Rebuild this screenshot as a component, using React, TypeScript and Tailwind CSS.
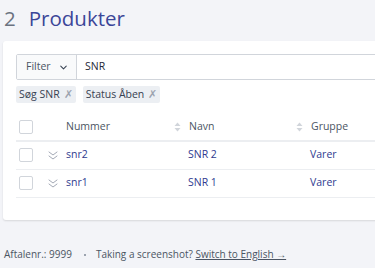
import React from "react";
import { ChevronDown } from "lucide-react";

interface Row {
  nummer: string;
  navn: string;
  gruppe: string;
}

const rows: Row[] = [
  { nummer: "snr2", navn: "SNR 2", gruppe: "Varer" },
  { nummer: "snr1", navn: "SNR 1", gruppe: "Varer" },
];

const Checkbox = () => (
  <span className="block h-[14px] w-[14px] rounded-[2px] border border-[#d1d5db] bg-white" />
);

const SortIcon = () => (
  <svg width="7" height="10" viewBox="0 0 7 10" className="shrink-0">
    <path d="M3.5 0.5 L6.5 4 L0.5 4 Z" fill="#d1d5db" />
    <path d="M3.5 9.5 L6.5 6 L0.5 6 Z" fill="#d1d5db" />
  </svg>
);

const DoubleChevron = () => (
  <svg width="10" height="9" viewBox="0 0 10 9" fill="none" stroke="#a3a9b5" strokeWidth="1" strokeLinecap="round" strokeLinejoin="round">
    <path d="M1 1 L5 4 L9 1" />
    <path d="M1 5 L5 8 L9 5" />
  </svg>
);

const Chip = ({ label }: { label: string }) => (
  <span className="flex h-[17px] items-center gap-[4px] rounded-[2px] bg-[#eceff3] px-[3px] text-[10.5px] text-[#374151]">
    {label}
    <span className="text-[11px] text-[#9ca3af]">✗</span>
  </span>
);

export default function App() {
  return (
    <div
      className="h-[268px] w-[375px] overflow-hidden bg-[#f3f4f8]"
      style={{ fontFamily: '"Open Sans", "Noto Sans", sans-serif' }}
    >
      <h1 className="flex h-[36px] items-center gap-[13px] pl-[4px] pt-[1px] text-[20.5px] leading-none">
        <span className="text-[#6b7280]">2</span>
        <span className="text-[#3b4699]">Produkter</span>
      </h1>

      <div className="ml-[3px] mt-[5px] h-[179px] w-[420px] rounded-[3px] bg-white pl-[13px] pt-[13px] shadow-[0_1px_2px_rgba(0,0,0,0.12)]">
        <div className="flex h-[26px] w-[400px] rounded-[2px] border border-[#d1d5db]">
          <div className="flex w-[60px] items-center gap-[7px] border-r border-[#d1d5db] bg-[#f9fafb] pl-[9px] text-[10.5px] text-[#4b5563]">
            Filter
            <ChevronDown size={11} strokeWidth={2.2} className="text-[#374151]" />
          </div>
          <div className="flex items-center pl-[8px] text-[10.5px] text-[#1f2937]">SNR</div>
        </div>

        <div className="mt-[6px] flex gap-[7px]">
          <Chip label="Søg SNR" />
          <Chip label="Status Åben" />
        </div>

        <table className="mt-[11px] w-[400px] border-collapse text-[10.5px]">
          <thead>
            <tr className="h-[27px] text-left text-[#4b5563]">
              <th className="w-[29px] border-b-2 border-[#eceef1] pl-[3px] font-normal">
                <Checkbox />
              </th>
              <th className="w-[21px] border-b-2 border-[#eceef1] font-normal" />
              <th className="w-[120px] border-b-2 border-[#eceef1] border-r-2 border-r-white font-normal">
                <div className="flex items-center justify-between pr-[4px] font-medium">
                  Nummer
                  <SortIcon />
                </div>
              </th>
              <th className="w-[122px] border-b-2 border-[#eceef1] border-r-2 border-r-white pl-[2px] font-normal">
                <div className="flex items-center justify-between pr-[4px] font-medium">
                  Navn
                  <SortIcon />
                </div>
              </th>
              <th className="border-b-2 border-[#eceef1] pl-[2px] font-medium">Gruppe</th>
            </tr>
          </thead>
          <tbody>
            {rows.map((row) => (
              <tr key={row.nummer} className="h-[28px] border-b border-[#eceef1] text-[#2f3b8f]">
                <td className="pl-[3px]">
                  <Checkbox />
                </td>
                <td className="pl-[3px]">
                  <DoubleChevron />
                </td>
                <td>{row.nummer}</td>
                <td className="pl-[2px]">{row.navn}</td>
                <td className="pl-[2px]">{row.gruppe}</td>
              </tr>
            ))}
          </tbody>
        </table>
      </div>

      <div className="mt-[27px] flex items-center pl-[4px] text-[10px] text-[#4b5563]">
        <span>Aftalenr.: 9999</span>
        <span className="ml-[12px] mr-[10px] h-[2px] w-[2px] bg-[#9ca3af]" />
        <span>Taking a screenshot?&nbsp;</span>
        <span className="underline">Switch to English →</span>
      </div>
    </div>
  );
}
